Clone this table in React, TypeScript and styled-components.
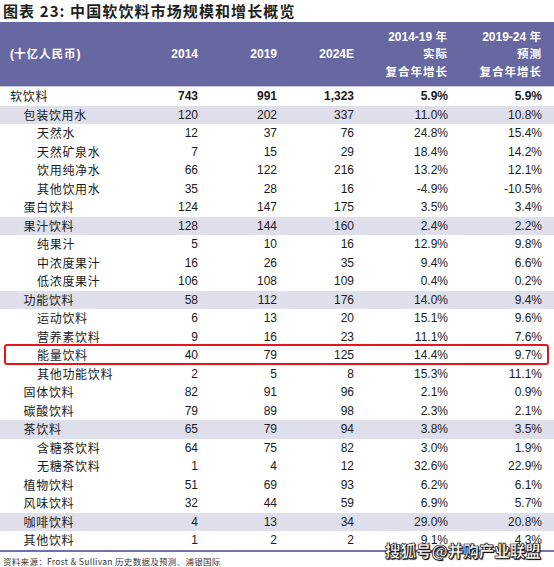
import React from 'react';
import styled, { createGlobalStyle } from 'styled-components';

const GlobalStyle = createGlobalStyle`
  body {
    margin: 0;
    background: #ffffff;
  }
`;

const CJK = `"Noto Sans CJK SC", "Noto Sans", sans-serif`;
const NUM = `"Liberation Sans", Arial, "Noto Sans CJK SC", sans-serif`;
const COLS = '130px 68px 79px 77px 94px 94px';

const Page = styled.div`
  position: relative;
  width: 554px;
  height: 567px;
  overflow: hidden;
  color: #1a1a1a;
`;

const Title = styled.div`
  height: 22px;
  padding-left: 3px;
  font-family: ${CJK};
  font-size: 15px;
  font-weight: 700;
  letter-spacing: 1.1px;
  line-height: 21px;
  color: #1e1e1e;
`;

const Header = styled.div`
  display: grid;
  grid-template-columns: ${COLS};
  height: 64px;
  padding-right: 12px;
  background: #6768a2;
  border-bottom: 1px solid #c9c9e0;
  color: #ffffff;
  font-family: ${NUM};
  font-size: 12px;
  font-weight: 700;
  align-items: center;
`;

const HeadCell = styled.div<{ $left?: boolean }>`
  text-align: ${(p) => (p.$left ? 'left' : 'right')};
  padding-left: ${(p) => (p.$left ? '10px' : '0')};
  line-height: 16.5px;
`;

const HeadCjk = styled.span`
  font-family: ${CJK};
  font-size: 11.5px;
  letter-spacing: 1px;
`;

const Row = styled.div<{ $shaded?: boolean; $marked?: boolean }>`
  position: relative;
  display: grid;
  grid-template-columns: ${COLS};
  height: 18.5px;
  padding-right: 12px;
  align-items: center;
  background: ${(p) => (p.$shaded ? '#dfdfec' : 'transparent')};

  ${(p) =>
    p.$marked &&
    `
    &::after {
      content: '';
      position: absolute;
      left: 4px;
      right: 5px;
      top: -2px;
      bottom: 0;
      border: 2px solid #e8141a;
      border-radius: 3px;
    }
  `}
`;

const Label = styled.div<{ $level: number }>`
  padding-left: ${(p) => 10 + p.$level * 13.5}px;
  font-family: ${CJK};
  font-size: 12px;
  letter-spacing: 0.7px;
  white-space: nowrap;
  line-height: 18px;
`;

const Num = styled.div<{ $bold?: boolean }>`
  text-align: right;
  font-family: ${NUM};
  font-size: 12px;
  font-weight: ${(p) => (p.$bold ? 700 : 400)};
  line-height: 18px;
`;

const BottomRule = styled.div`
  height: 2px;
  background: #6f70ae;
`;

const Source = styled.div`
  padding: 3px 0 0 3px;
  font-family: ${CJK};
  font-size: 8.5px;
  color: #333;
  letter-spacing: 0.3px;
`;

const Watermark = styled.div`
  position: absolute;
  left: 385px;
  top: 539px;
  font-family: ${CJK};
  font-size: 15.5px;
  font-weight: 900;
  color: #ffffff;
  -webkit-text-stroke: 0.6px #1a1a1a;
  text-shadow: 0 0 1px #000, 1px 1px 1px #000;
  white-space: nowrap;
`;

type Item = {
  name: string;
  level: number;
  values: string[];
  shaded?: boolean;
  bold?: boolean;
  marked?: boolean;
};

const rows: Item[] = [
  { name: '软饮料', level: 0, values: ['743', '991', '1,323', '5.9%', '5.9%'], bold: true },
  { name: '包装饮用水', level: 1, values: ['120', '202', '337', '11.0%', '10.8%'], shaded: true },
  { name: '天然水', level: 2, values: ['12', '37', '76', '24.8%', '15.4%'] },
  { name: '天然矿泉水', level: 2, values: ['7', '15', '29', '18.4%', '14.2%'] },
  { name: '饮用纯净水', level: 2, values: ['66', '122', '216', '13.2%', '12.1%'] },
  { name: '其他饮用水', level: 2, values: ['35', '28', '16', '-4.9%', '-10.5%'] },
  { name: '蛋白饮料', level: 1, values: ['124', '147', '175', '3.5%', '3.4%'] },
  { name: '果汁饮料', level: 1, values: ['128', '144', '160', '2.4%', '2.2%'], shaded: true },
  { name: '纯果汁', level: 2, values: ['5', '10', '16', '12.9%', '9.8%'] },
  { name: '中浓度果汁', level: 2, values: ['16', '26', '35', '9.4%', '6.6%'] },
  { name: '低浓度果汁', level: 2, values: ['106', '108', '109', '0.4%', '0.2%'] },
  { name: '功能饮料', level: 1, values: ['58', '112', '176', '14.0%', '9.4%'], shaded: true },
  { name: '运动饮料', level: 2, values: ['6', '13', '20', '15.1%', '9.6%'] },
  { name: '营养素饮料', level: 2, values: ['9', '16', '23', '11.1%', '7.6%'] },
  { name: '能量饮料', level: 2, values: ['40', '79', '125', '14.4%', '9.7%'], marked: true },
  { name: '其他功能饮料', level: 2, values: ['2', '5', '8', '15.3%', '11.1%'] },
  { name: '固体饮料', level: 1, values: ['82', '91', '96', '2.1%', '0.9%'] },
  { name: '碳酸饮料', level: 1, values: ['79', '89', '98', '2.3%', '2.1%'] },
  { name: '茶饮料', level: 1, values: ['65', '79', '94', '3.8%', '3.5%'], shaded: true },
  { name: '含糖茶饮料', level: 2, values: ['64', '75', '82', '3.0%', '1.9%'] },
  { name: '无糖茶饮料', level: 2, values: ['1', '4', '12', '32.6%', '22.9%'] },
  { name: '植物饮料', level: 1, values: ['51', '69', '93', '6.2%', '6.1%'] },
  { name: '风味饮料', level: 1, values: ['32', '44', '59', '6.9%', '5.7%'] },
  { name: '咖啡饮料', level: 1, values: ['4', '13', '34', '29.0%', '20.8%'], shaded: true },
  { name: '其他饮料', level: 1, values: ['1', '2', '2', '9.1%', '4.3%'] },
];

// 软饮料市场规模表
export default function App() {
  return (
    <Page>
      <GlobalStyle />
      <Title>图表 23: 中国软饮料市场规模和增长概览</Title>
      <Header>
        <HeadCell $left>
          (<HeadCjk>十亿人民币</HeadCjk>)
        </HeadCell>
        <HeadCell>2014</HeadCell>
        <HeadCell>2019</HeadCell>
        <HeadCell>2024E</HeadCell>
        <HeadCell>
          2014-19 <HeadCjk>年</HeadCjk>
          <br />
          <HeadCjk>实际</HeadCjk>
          <br />
          <HeadCjk>复合年增长</HeadCjk>
        </HeadCell>
        <HeadCell>
          2019-24 <HeadCjk>年</HeadCjk>
          <br />
          <HeadCjk>预测</HeadCjk>
          <br />
          <HeadCjk>复合年增长</HeadCjk>
        </HeadCell>
      </Header>
      {rows.map((row) => (
        <Row key={row.name} $shaded={row.shaded} $marked={row.marked}>
          <Label $level={row.level}>{row.name}</Label>
          {row.values.map((v, i) => (
            <Num key={i} $bold={row.bold}>
              {v}
            </Num>
          ))}
        </Row>
      ))}
      <BottomRule />
      <Source>资料来源：Frost &amp; Sullivan 历史数据及预测、浦银国际</Source>
      <Watermark>搜狐号@并购产业联盟</Watermark>
    </Page>
  );
}
